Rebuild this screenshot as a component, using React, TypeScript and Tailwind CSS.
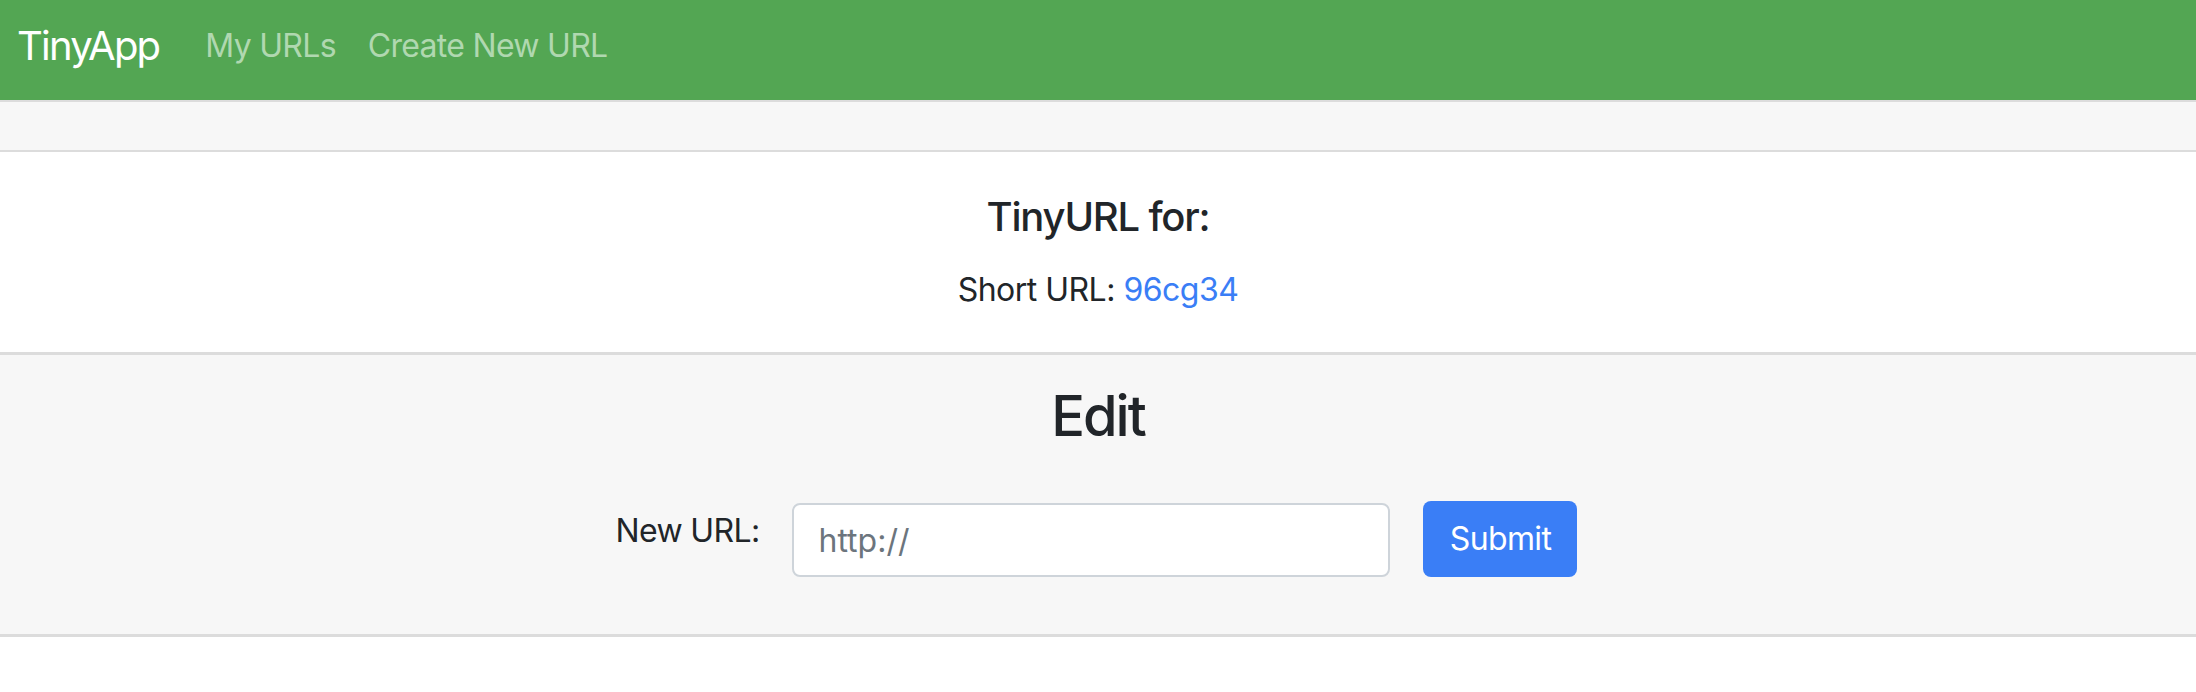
const App = () => {
    return (
        <div className="min-h-[692px] bg-white text-[#212529] font-['Inter',sans-serif]">

            <nav className="h-[100px] bg-[#53a653] flex items-center pl-[17px] pb-[8px]">
                <span className="text-[40px] text-white leading-none tracking-[-0.045em]">TinyApp</span>
                <div className="flex ml-[46px] gap-[32px] text-[32px] text-[#b0d8b0] leading-none tracking-[-0.022em]">
                    <span>My URLs</span>
                    <span>Create New URL</span>
                </div>
            </nav>

            <div className="h-[52px] bg-[#f7f7f7] border-t-2 border-b-2 border-[#dcdcdc]"></div>

            <div className="h-[200px] flex flex-col items-center pt-[41px]">
                <h5 className="text-[40px] font-medium leading-[48px] tracking-[-0.03em]">TinyURL for:</h5>
                <p className="text-[32px] leading-[48px] mt-[25px] tracking-[-0.016em]">
                    Short URL: <a className="text-[#3a7ef6]">96cg34</a>
                </p>
            </div>

            <div className="h-[285px] bg-[#f7f7f7] border-t-3 border-b-3 border-[#dcdcdc] flex flex-col items-center pt-[28px]">
                <h3 className="text-[56px] font-medium leading-[67px] tracking-[-0.035em]">Edit</h3>

                <div className="flex items-start justify-center gap-[33px] mt-[51px] mr-[3px]">
                    <label className="text-[32px] leading-[48px] mt-[6px] tracking-[-0.02em]">New URL:</label>
                    <input
                        placeholder="http://"
                        className="w-[598px] h-[74px] mt-[2px] bg-white border-2 border-[#ced4da] rounded-[8px] px-[24px] text-[32px] placeholder:text-[#6c757d] outline-none"
                    />
                    <button className="w-[154px] h-[76px] bg-[#3a7ef6] text-white text-[32px] rounded-[8px] tracking-[-0.02em]">Submit</button>
                </div>
            </div>

        </div>
    )
}

export default App
